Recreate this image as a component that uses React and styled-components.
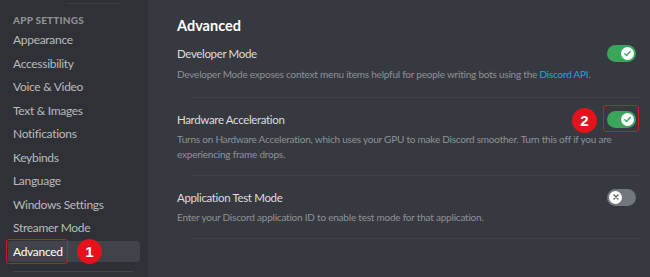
import React from 'react';
import styled, { createGlobalStyle } from 'styled-components';

const GlobalStyle = createGlobalStyle`
  html, body {
    margin: 0;
    padding: 0;
    background: #36393f;
  }
  body {
    font-family: Lato, "Noto Sans", sans-serif;
    -webkit-font-smoothing: antialiased;
  }
`;

const StyledLayout = styled.div`
  display: flex;
  width: 650px;
  height: 277px;
  overflow: hidden;
  background: #36393f;
`;

const StyledSidebar = styled.nav`
  width: 148px;
  flex-shrink: 0;
  background: #2f3136;
  padding: 0 8px;
  box-sizing: border-box;
  display: flex;
  flex-direction: column;
  .sidebar__top-line {
    height: 1px;
    margin: 3px 20px 0 59px;
    background: #393c42;
  }
  .sidebar__header {
    margin: 10px 0 3px 5px;
    font-size: 10px;
    font-weight: 900;
    letter-spacing: 0.2px;
    color: #8e9297;
    text-transform: uppercase;
  }
  .sidebar__divider {
    height: 1px;
    margin: 7px 7px 0 5px;
    background: #42454b;
  }
`;

const SidebarItem = styled.div`
  position: relative;
  height: 21px;
  margin-bottom: 2.5px;
  padding-left: 5px;
  border-radius: 3px;
  display: flex;
  align-items: center;
  font-size: 12px;
  letter-spacing: -0.3px;
  color: ${({ selected }) => (selected ? '#ffffff' : '#b9bbbe')};
  background: ${({ selected }) => (selected ? '#40434a' : 'transparent')};
`;

const HighlightBox = styled.span`
  position: absolute;
  left: ${({ left }) => left}px;
  top: ${({ top }) => top}px;
  width: ${({ width }) => width}px;
  height: ${({ height }) => height}px;
  border: 1.5px solid #d21920;
  border-radius: 3px;
  box-sizing: border-box;
  pointer-events: none;
`;

const Badge = styled.span`
  position: absolute;
  left: ${({ left }) => left}px;
  top: ${({ top }) => top}px;
  width: 25px;
  height: 25px;
  border-radius: 50%;
  background: #e5121b;
  color: #fff;
  font-family: "Liberation Sans", Arial, sans-serif;
  font-size: 15px;
  font-weight: 700;
  letter-spacing: 0;
  display: flex;
  align-items: center;
  justify-content: center;
`;

const StyledContent = styled.main`
  flex: 1;
  padding: 17px 10px 0 29px;
  .content__title {
    margin: 0 0 11px;
    font-size: 14.5px;
    line-height: 17px;
    font-weight: 700;
    color: #ffffff;
  }
`;

const SettingRow = styled.section`
  .setting__head {
    display: flex;
    align-items: center;
    justify-content: space-between;
    height: 17px;
  }
  .setting__name {
    font-size: 11.5px;
    letter-spacing: -0.35px;
    color: #dcddde;
  }
  .setting__note {
    margin-top: ${({ gap }) => gap}px;
    width: 442px;
    font-size: 10px;
    letter-spacing: -0.22px;
    line-height: 15px;
    color: #8e9297;
    a {
      color: #00aff4;
      text-decoration: none;
    }
  }
`;

const Divider = styled.hr`
  height: 1px;
  border: none;
  background: #3f4248;
  margin: ${({ above }) => above}px 0 12.5px 15px;
`;

const StyledToggle = styled.div`
  position: relative;
  width: 29px;
  height: 17px;
  margin-right: 4px;
  border-radius: 9px;
  background: ${({ on }) => (on ? '#3ba55c' : '#72767d')};
  .toggle__knob {
    position: absolute;
    top: 2px;
    left: ${({ on }) => (on ? '14px' : '2px')};
    width: 13px;
    height: 13px;
    border-radius: 50%;
    background: #fff;
    display: flex;
    align-items: center;
    justify-content: center;
  }
`;

const Toggle = ({ on, children }) => (
  <StyledToggle on={on ? 1 : 0}>
    <span className="toggle__knob">
      {on ? (
        <svg width="9" height="9" viewBox="0 0 20 20">
          <path d="M4 10.5l4 4 8-9" fill="none" stroke="#3ba55c" strokeWidth="3" strokeLinecap="round" strokeLinejoin="round" />
        </svg>
      ) : (
        <svg width="8" height="8" viewBox="0 0 20 20">
          <path d="M5 5l10 10M15 5L5 15" fill="none" stroke="#5c6067" strokeWidth="3.5" strokeLinecap="round" />
        </svg>
      )}
    </span>
    {children}
  </StyledToggle>
);

const menu = [
  'Appearance',
  'Accessibility',
  'Voice & Video',
  'Text & Images',
  'Notifications',
  'Keybinds',
  'Language',
  'Windows Settings',
  'Streamer Mode',
];

const App = () => (
  <>
    <GlobalStyle />
    <StyledLayout>
      <StyledSidebar>
        <div className="sidebar__top-line" />
        <div className="sidebar__header">App Settings</div>
        {menu.map((item) => (
          <SidebarItem key={item}>{item}</SidebarItem>
        ))}
        <SidebarItem selected>
          Advanced
          <HighlightBox left={-2} top={-2} width={62} height={25} />
          <Badge left={69} top={-2}>1</Badge>
        </SidebarItem>
        <div className="sidebar__divider" />
      </StyledSidebar>

      <StyledContent>
        <h2 className="content__title">Advanced</h2>

        <SettingRow gap={5}>
          <div className="setting__head">
            <span className="setting__name">Developer Mode</span>
            <Toggle on />
          </div>
          <div className="setting__note">
            Developer Mode exposes context menu items helpful for people writing bots using the{' '}
            <a href="#">Discord API</a>.
          </div>
        </SettingRow>
        <Divider above={15} />

        <SettingRow gap={4.5}>
          <div className="setting__head">
            <span className="setting__name">Hardware Acceleration</span>
            <Toggle on>
              <HighlightBox left={-4} top={-6} width={36} height={27} />
              <Badge left={-35} top={-3}>2</Badge>
            </Toggle>
          </div>
          <div className="setting__note">
            Turns on Hardware Acceleration, which uses your GPU to make Discord smoother. Turn this off if you
            are experiencing frame drops.
          </div>
        </SettingRow>
        <Divider above={13} />

        <SettingRow gap={4.5}>
          <div className="setting__head">
            <span className="setting__name">Application Test Mode</span>
            <Toggle />
          </div>
          <div className="setting__note">
            Enter your Discord application ID to enable test mode for that application.
          </div>
        </SettingRow>
        <Divider above={13} />
      </StyledContent>
    </StyledLayout>
  </>
);

export default App;
